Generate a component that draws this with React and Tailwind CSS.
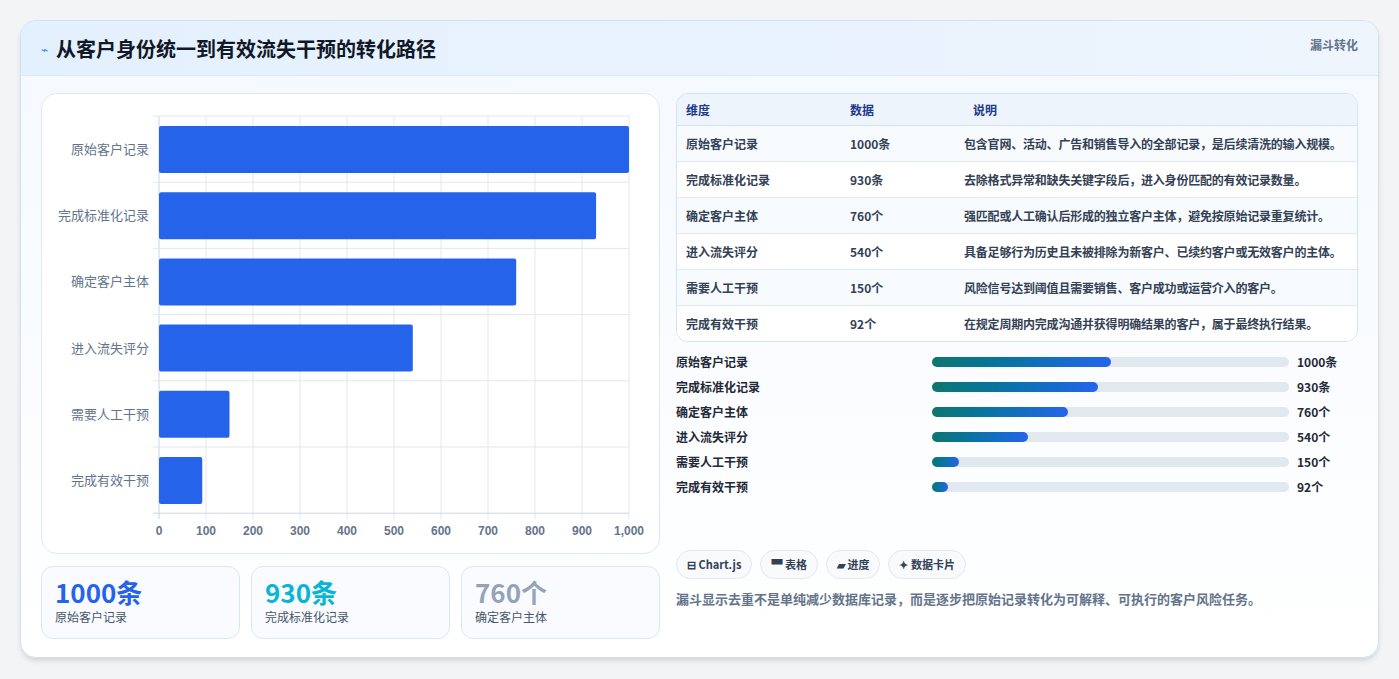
const font = { fontFamily: '"Noto Sans CJK SC", "Noto Sans", sans-serif' };

const funnel = [
  { name: "原始客户记录", value: 1000, unit: "条", note: "包含官网、活动、广告和销售导入的全部记录，是后续清洗的输入规模。" },
  { name: "完成标准化记录", value: 930, unit: "条", note: "去除格式异常和缺失关键字段后，进入身份匹配的有效记录数量。" },
  { name: "确定客户主体", value: 760, unit: "个", note: "强匹配或人工确认后形成的独立客户主体，避免按原始记录重复统计。" },
  { name: "进入流失评分", value: 540, unit: "个", note: "具备足够行为历史且未被排除为新客户、已续约客户或无效客户的主体。" },
  { name: "需要人工干预", value: 150, unit: "个", note: "风险信号达到阈值且需要销售、客户成功或运营介入的客户。" },
  { name: "完成有效干预", value: 92, unit: "个", note: "在规定周期内完成沟通并获得明确结果的客户，属于最终执行结果。" },
];

function Chart() {
  const x0 = 117, x1 = 587, y0 = 22, band = 66.2;
  const sx = (v) => x0 + ((x1 - x0) * v) / 1000;
  return (
    <svg width="619" height="460" className="block">
      {[...Array(11)].map((_, i) => (
        <g key={i}>
          <line x1={sx(i * 100)} x2={sx(i * 100)} y1={y0} y2={y0 + band * 6 + 6} stroke={i === 0 ? "#cbd5e1" : "#e5e7eb"} />
          <text x={sx(i * 100)} y={441} textAnchor="middle" fontSize="12" fontWeight="600" fill="#64748b" fontFamily="Liberation Sans, sans-serif">
            {i === 10 ? "1,000" : i * 100}
          </text>
        </g>
      ))}
      {[...Array(7)].map((_, i) => (
        <line key={i} x1={x0 - 6} x2={x1} y1={y0 + band * i} y2={y0 + band * i} stroke={i === 6 ? "#cbd5e1" : "#e5e7eb"} />
      ))}
      {funnel.map((d, i) => (
        <g key={d.name}>
          <rect x={x0} y={y0 + band * i + 10} width={sx(d.value) - x0} height={47} rx="2" fill="#2563eb" />
          <text x={107} y={y0 + band * i + 38} textAnchor="end" fontSize="13" fill="#64748b">{d.name}</text>
        </g>
      ))}
    </svg>
  );
}

export default function App() {
  return (
    <div className="min-h-screen bg-[#f3f4f6] pt-5 px-5" style={font}>
      <div className="rounded-2xl border border-[#cfe3f3] bg-gradient-to-b from-[#f4f9ff] to-white shadow-md overflow-hidden h-[638px]">
        <div className="h-[55px] flex items-start justify-between px-5 bg-gradient-to-r from-[#e3f0fd] to-[#eef5fd] border-b border-[#dbe8f5]">
          <div className="flex items-center gap-2 mt-[13px]">
            <span className="text-[#3b82f6] text-xs">⌁</span>
            <h1 className="text-[20px] font-bold text-[#111827]">从客户身份统一到有效流失干预的转化路径</h1>
          </div>
          <span className="mt-[15px] text-[12px] font-semibold text-[#64748b]">漏斗转化</span>
        </div>
        <div className="flex gap-4 px-5 pt-[17px]">
          <div className="w-[619px] flex flex-col gap-3">
            <div className="rounded-2xl border border-[#e2e8f0] bg-white h-[461px]">
              <Chart />
            </div>
            <div className="grid grid-cols-3 gap-[11px]">
              {[["1000条", "text-[#2563eb]", "原始客户记录"], ["930条", "text-[#06b6d4]", "完成标准化记录"], ["760个", "text-[#94a3b8]", "确定客户主体"]].map(([v, c, l]) => (
                <div key={l} className="rounded-xl border border-[#dbe7f3] bg-[#f9fbff] h-[73px] px-[13px] pt-[9px]">
                  <div className={`text-[26px] leading-[32px] font-bold ${c}`}>{v}</div>
                  <div className="text-[12px] text-[#475569]">{l}</div>
                </div>
              ))}
            </div>
          </div>
          <div className="w-[686px] flex flex-col">
            <div className="rounded-xl border border-[#d6e2ee] overflow-hidden text-[12px]">
              <div className="flex h-[32px] items-center bg-[#eef4fb] font-semibold text-[#1e3a8a] border-b border-[#d6e2ee]">
                <div className="w-[173px] pl-[9px]">维度</div>
                <div className="w-[123px]">数据</div>
                <div className="flex-1">说明</div>
              </div>
              {funnel.map((d, i) => (
                <div key={d.name} className={`flex py-[9px] leading-[17px] font-semibold text-[#334155] ${i % 2 ? "bg-white" : "bg-[#f8fbfe]"} ${i < 5 ? "border-b border-[#e2e8f0]" : ""}`}>
                  <div className="w-[173px] pl-[9px] shrink-0">{d.name}</div>
                  <div className="w-[114px] shrink-0">{d.value}{d.unit}</div>
                  <div className="flex-1 pr-2 tracking-[-0.2px]">{d.note}</div>
                </div>
              ))}
            </div>
            <div className="flex flex-col gap-[7px] mt-[11px]">
              {funnel.map((d) => (
                <div key={d.name} className="flex items-center h-[18px] text-[12px] font-semibold text-[#1f2937]">
                  <div className="w-[256px]">{d.name}</div>
                  <div className="w-[357px] h-[10px] rounded-full bg-[#e2e8f0]">
                    <div className="h-full rounded-full bg-gradient-to-r from-[#0f766e] to-[#2563eb]" style={{ width: `${d.value / 20}%` }} />
                  </div>
                  <div className="ml-2 font-bold">{d.value}{d.unit}</div>
                </div>
              ))}
            </div>
            <div className="flex gap-2 mt-[54px]">
              {["⊟ Chart.js", "▀ 表格", "▰ 进度", "✦ 数据卡片"].map((t) => (
                <span key={t} className="h-[29px] px-[10px] flex items-center rounded-full border border-[#e2e8f0] bg-[#f8fafc] text-[11px] font-semibold text-[#334155]">{t}</span>
              ))}
            </div>
            <p className="mt-[10px] text-[13px] font-semibold text-[#64748b]">漏斗显示去重不是单纯减少数据库记录，而是逐步把原始记录转化为可解释、可执行的客户风险任务。</p>
          </div>
        </div>
      </div>
    </div>
  );
}
